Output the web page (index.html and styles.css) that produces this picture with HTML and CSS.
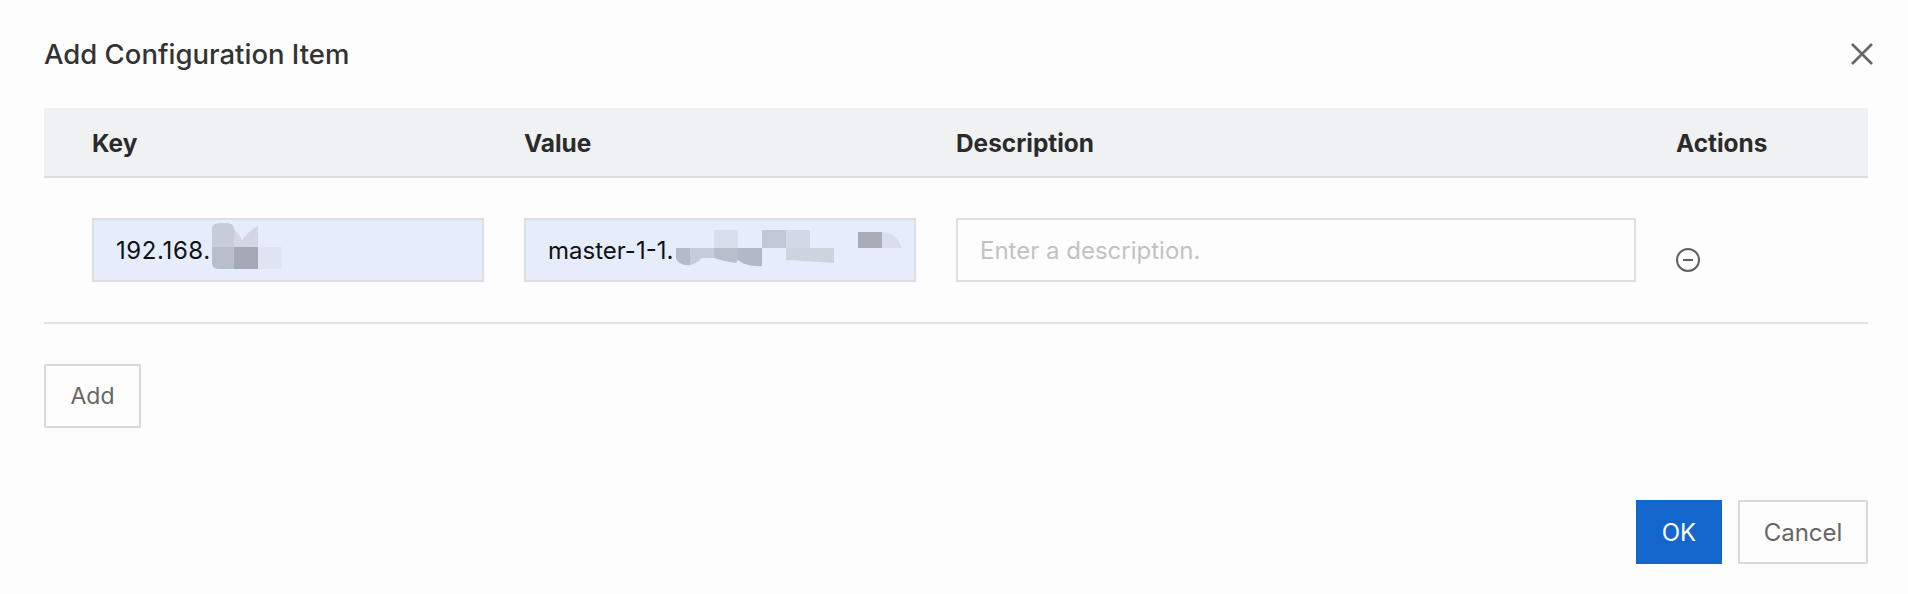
FILE: index.html
```html
<!DOCTYPE html>
<html lang="en">
<head>
<meta charset="utf-8">
<title>Add Configuration Item</title>
<link rel="stylesheet" href="styles.css">
</head>
<body>
<main class="dialog">
  <header class="dialog-head">
    <h1 class="dialog-title">Add Configuration Item</h1>
    <svg class="close-icon" viewBox="0 0 22 22" aria-label="Close"><path d="M1 1 21 21M21 1 1 21"/></svg>
  </header>
  <section class="table">
    <div class="grid table-head">
      <div>Key</div>
      <div>Value</div>
      <div>Description</div>
      <div>Actions</div>
    </div>
    <div class="grid table-row">
      <div class="field field-filled field-ip">192.168.
        <svg class="mosaic" viewBox="92 218 392 64">
          <path fill="#c6ccd9" d="M212 229q0-6 8-6h6q8 0 8 6v18h-22z"/>
          <path fill="#d2d7e3" d="M234 229q6 6 8 12 6-10 16-15v21h-24z"/>
          <path fill="#b9becb" d="M212 247h22v22h-14q-8 0-8-6z"/>
          <rect fill="#a4a9b5" x="234" y="247" width="24" height="22"/>
          <rect fill="#dfe4f2" x="258" y="247" width="24" height="22"/>
        </svg>
      </div>
      <div class="field field-filled">master-1-1.
        <svg class="mosaic" viewBox="524 218 392 64">
          <rect fill="#d8deeb" x="714" y="230" width="24" height="18"/>
          <rect fill="#c1c7d4" x="762" y="230" width="24" height="18"/>
          <rect fill="#d2d8e5" x="786" y="230" width="24" height="18"/>
          <rect fill="#a9adba" x="858" y="232" width="24" height="16"/>
          <path fill="#d8deeb" d="M882 232q14 0 20 16h-20z"/>
          <path fill="#b5bac7" d="M676 248h14v17q-10 1-14-6z"/>
          <path fill="#c5cbd8" d="M690 248h24v10h-12q-6 6-12 7z"/>
          <path fill="#b8becb" d="M714 248h24v12l-2 3q-10-1-22-5z"/>
          <path fill="#b3b9c6" d="M738 248h24v18q-16 1-24-6z"/>
          <path fill="#ced3e0" d="M786 248h48v15q-30-2-48-3z"/>
        </svg>
      </div>
      <div class="field field-empty">Enter a description.</div>
      <div class="action-cell">
        <svg class="minus-icon" viewBox="0 0 24 24" aria-label="Remove"><circle cx="12" cy="12" r="11"/><path d="M7 12h10"/></svg>
      </div>
    </div>
  </section>
  <button class="btn btn-add" type="button">Add</button>
  <footer class="dialog-foot">
    <button class="btn btn-primary" type="button">OK</button>
    <button class="btn btn-cancel" type="button">Cancel</button>
  </footer>
</main>
</body>
</html>
```
FILE: styles.css
```css
* {
  box-sizing: border-box;
}

html,
body {
  margin: 0;
  height: 100%;
  background: #fdfdfd;
}

body {
  font-family: Inter, "Liberation Sans", sans-serif;
  font-size: 24px;
  color: #333;
  overflow: hidden;
}

.dialog {
  padding: 0 40px 0 44px;
}

.dialog-head {
  height: 108px;
  margin-right: -5px;
  display: flex;
  align-items: center;
  justify-content: space-between;
}

.dialog-title {
  margin: 0;
  font-size: 27.5px;
  line-height: 32px;
  font-weight: 500;
  color: #333;
}

.close-icon {
  width: 22px;
  height: 22px;
  fill: none;
  stroke: #666;
  stroke-width: 2.6;
}

.grid {
  display: grid;
  grid-template-columns: 392px 392px 680px 1fr;
  column-gap: 40px;
  padding-left: 48px;
}

.table-head {
  height: 70px;
  padding-top: 2px;
  align-items: center;
  background: #f0f1f3;
  border-bottom: 2px solid #dedede;
  font-size: 24.4px;
  font-weight: 700;
  color: #2b2b2b;
}

.table-row {
  height: 146px;
  padding-top: 40px;
  border-bottom: 2px solid #e2e2e2;
}

.field {
  position: relative;
  height: 64px;
  padding: 0 22px;
  display: flex;
  align-items: center;
  border: 2px solid #dfdfdf;
  font-size: 24px;
}

.field-filled {
  background: #e5edfd;
  color: #111;
}

.field-ip {
  letter-spacing: 0.6px;
}

.field-empty {
  background: #fdfdfd;
  color: #c2c2c2;
}

.mosaic {
  position: absolute;
  top: -2px;
  left: -2px;
  width: 392px;
  height: 64px;
}

.action-cell {
  padding-top: 30px;
}

.minus-icon {
  display: block;
  width: 24px;
  height: 24px;
  fill: none;
  stroke: #5f5f5f;
  stroke-width: 2;
}

.btn {
  height: 64px;
  margin: 0;
  border: 2px solid #d9d9d9;
  border-radius: 0;
  background: transparent;
  font-family: inherit;
  font-size: 24px;
  color: #666;
}

.btn-add {
  display: block;
  width: 97px;
  margin-top: 40px;
  font-size: 23px;
}

.dialog-foot {
  margin-top: 72px;
  display: flex;
  justify-content: flex-end;
  gap: 16px;
}

.btn-primary {
  width: 86px;
  border-color: #1366cc;
  background: #1366cc;
  color: #fff;
}

.btn-cancel {
  width: 130px;
}
```
